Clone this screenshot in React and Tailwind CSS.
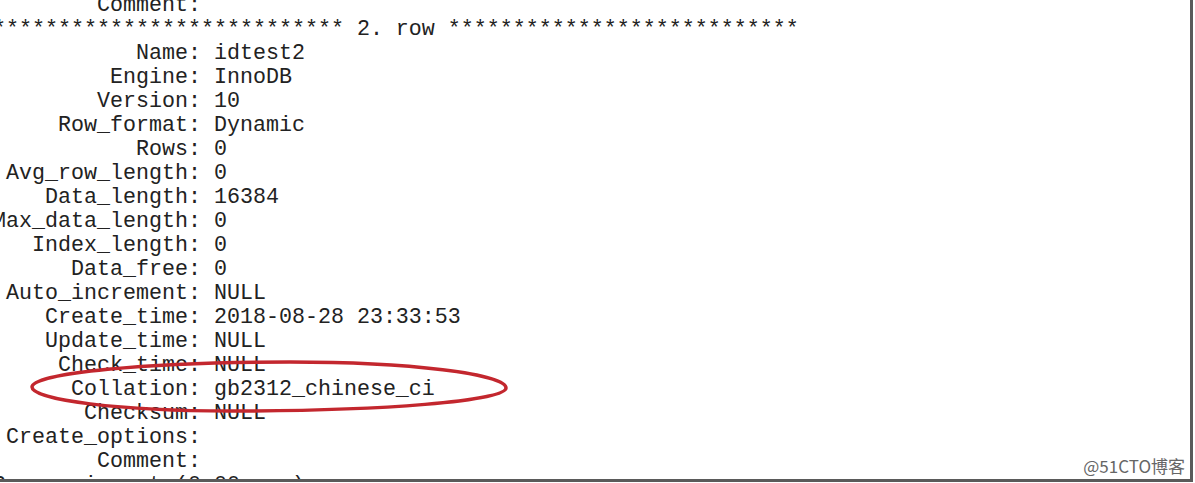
import React from 'react'

const fields = [
  ['Name', 'idtest2'],
  ['Engine', 'InnoDB'],
  ['Version', '10'],
  ['Row_format', 'Dynamic'],
  ['Rows', '0'],
  ['Avg_row_length', '0'],
  ['Data_length', '16384'],
  ['Max_data_length', '0'],
  ['Index_length', '0'],
  ['Data_free', '0'],
  ['Auto_increment', 'NULL'],
  ['Create_time', '2018-08-28 23:33:53'],
  ['Update_time', 'NULL'],
  ['Check_time', 'NULL'],
  ['Collation', 'gb2312_chinese_ci'],
  ['Checksum', 'NULL'],
  ['Create_options', ''],
  ['Comment', ''],
]

const stars = '***************************'

const lines = [
  'Comment'.padStart(15) + ': ',
  `${stars} 2. row ${stars}`,
  ...fields.map(([k, v]) => k.padStart(15) + ': ' + v),
  '2 rows in set (0.00 sec)',
]

const App = () => {
  return (
    <div className="w-[1195px] h-[483px] bg-white overflow-hidden">
      <div className="relative w-[1193px] h-[482px] overflow-hidden border-r-[3px] border-b-[3px] border-[#5a5a5a] bg-white">
        <pre className="-mt-[6px] -ml-[7px] font-['Liberation_Mono','Courier_New',monospace] text-[21.67px] leading-[24px] text-[#222]">
          {lines.join('\n')}
        </pre>

        {/* hand drawn red mark around the collation row */}
        <svg className="absolute inset-0 pointer-events-none" width="1190" height="479">
          <path
            d="M32 387 C32 373 148 362 290 362 C409 362 506 374 506 388 C506 401 382 411 230 411 C121 411 32 400 32 387 Z"
            fill="none"
            stroke="#c3272e"
            strokeWidth="3.5"
          />
        </svg>

        <div className="absolute right-[5px] bottom-[5px] font-['Noto_Sans_CJK_SC',sans-serif] text-[17px] leading-none text-[#666]">
          @51CTO博客
        </div>
      </div>
    </div>
  )
}

export default App
